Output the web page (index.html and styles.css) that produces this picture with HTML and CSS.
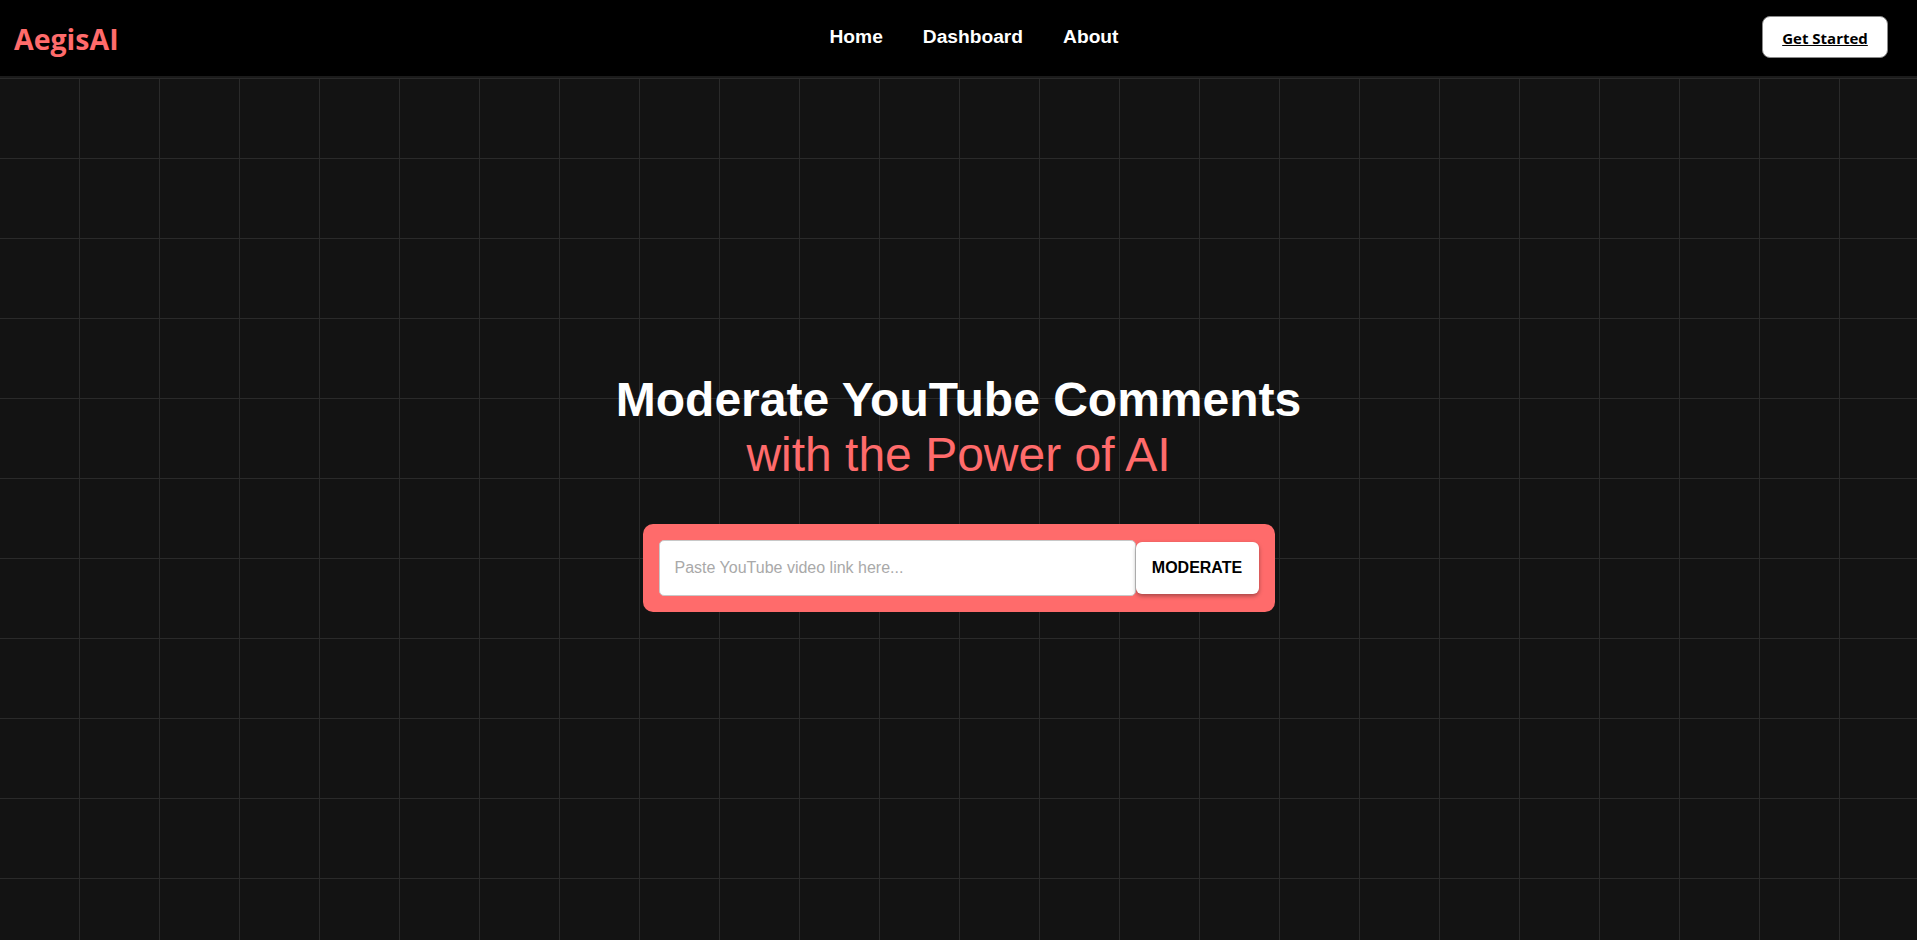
FILE: index.html
```html
<!DOCTYPE html>
<html lang="en">
<head>
<meta charset="utf-8">
<title>AegisAI</title>
<link rel="stylesheet" href="styles.css">
</head>
<body>
<header class="navbar">
  <div class="brand">AegisAI</div>
  <nav class="links">
    <a href="#" class="link">Home</a>
    <a href="#" class="link">Dashboard</a>
    <a href="#" class="link">About</a>
  </nav>
  <div class="actions">
    <button class="cta"><a href="#">Get Started</a></button>
  </div>
</header>
<main class="hero">
  <h1 class="title">Moderate YouTube Comments<span class="accent">with the Power of AI</span></h1>
  <form class="search">
    <input class="field" type="text" placeholder="Paste YouTube video link here...">
    <button class="submit" type="button">MODERATE</button>
  </form>
</main>
</body>
</html>
```

FILE: styles.css
```css
* { box-sizing: border-box; }
html, body { margin: 0; padding: 0; }
body {
  min-height: 940px;
  background-color: #131313;
  background-image:
    linear-gradient(to right, transparent 79px, #2a2a2a 79px, #2a2a2a 80px, transparent 80px),
    linear-gradient(to bottom, transparent 78px, #2a2a2a 78px, #2a2a2a 79px, transparent 79px);
  background-size: 80px 80px;
  font-family: "Liberation Sans", Arial, sans-serif;
  overflow: hidden;
}
.navbar {
  height: 78px;
  background: #000;
  border-bottom: 2px solid #1b1b1b;
  display: flex;
  align-items: center;
  padding: 0 29px 0 14px;
}
.brand {
  flex: 1;
  font-family: "Open Sans", sans-serif;
  font-weight: 700;
  font-size: 28.5px;
  color: #ff6b6b;
  padding-top: 1px;
}
.links {
  display: flex;
  gap: 40px;
  margin-left: 46px;
  padding-bottom: 2px;
}
.link {
  color: #fff;
  text-decoration: none;
  font-weight: 700;
  font-size: 19.2px;
}
.actions {
  flex: 1;
  display: flex;
  justify-content: flex-end;
}
.cta {
  height: 42px;
  width: 126px;
  margin-bottom: 2px;
  background: #fff;
  border: 1px solid #8a8a8a;
  border-radius: 8px;
  padding: 0;
  display: flex;
  align-items: center;
  justify-content: center;
}
.cta a {
  color: #000;
  font-family: "Open Sans", sans-serif;
  font-weight: 700;
  font-size: 15px;
  text-decoration: underline;
  padding-top: 2px;
}
.hero {
  display: flex;
  flex-direction: column;
  align-items: center;
  padding-top: 294px;
}
.title {
  margin: 0;
  text-align: center;
  color: #fff;
  font-size: 48px;
  font-weight: 700;
  line-height: 55px;
}
.accent {
  display: block;
  color: #ff6b6b;
  font-weight: 400;
}
.search {
  margin-top: 42px;
  width: 632px;
  height: 88px;
  background: #ff6b6b;
  border-radius: 10px;
  padding: 16px;
  display: flex;
  align-items: center;
}
.field {
  flex: 1;
  height: 56px;
  border: 1px solid #c8c8c8;
  border-radius: 5px;
  padding: 0 15px;
  font-family: "Liberation Sans", Arial, sans-serif;
  font-size: 16px;
  outline: none;
}
.field::placeholder { color: #a9a9a9; }
.submit {
  width: 123px;
  height: 52px;
  background: #fff;
  border: none;
  border-radius: 6px;
  box-shadow: 0 2px 4px rgba(0,0,0,0.35);
  font-family: "Liberation Sans", Arial, sans-serif;
  font-weight: 700;
  font-size: 16px;
  color: #000;
  padding: 0;
}
```
